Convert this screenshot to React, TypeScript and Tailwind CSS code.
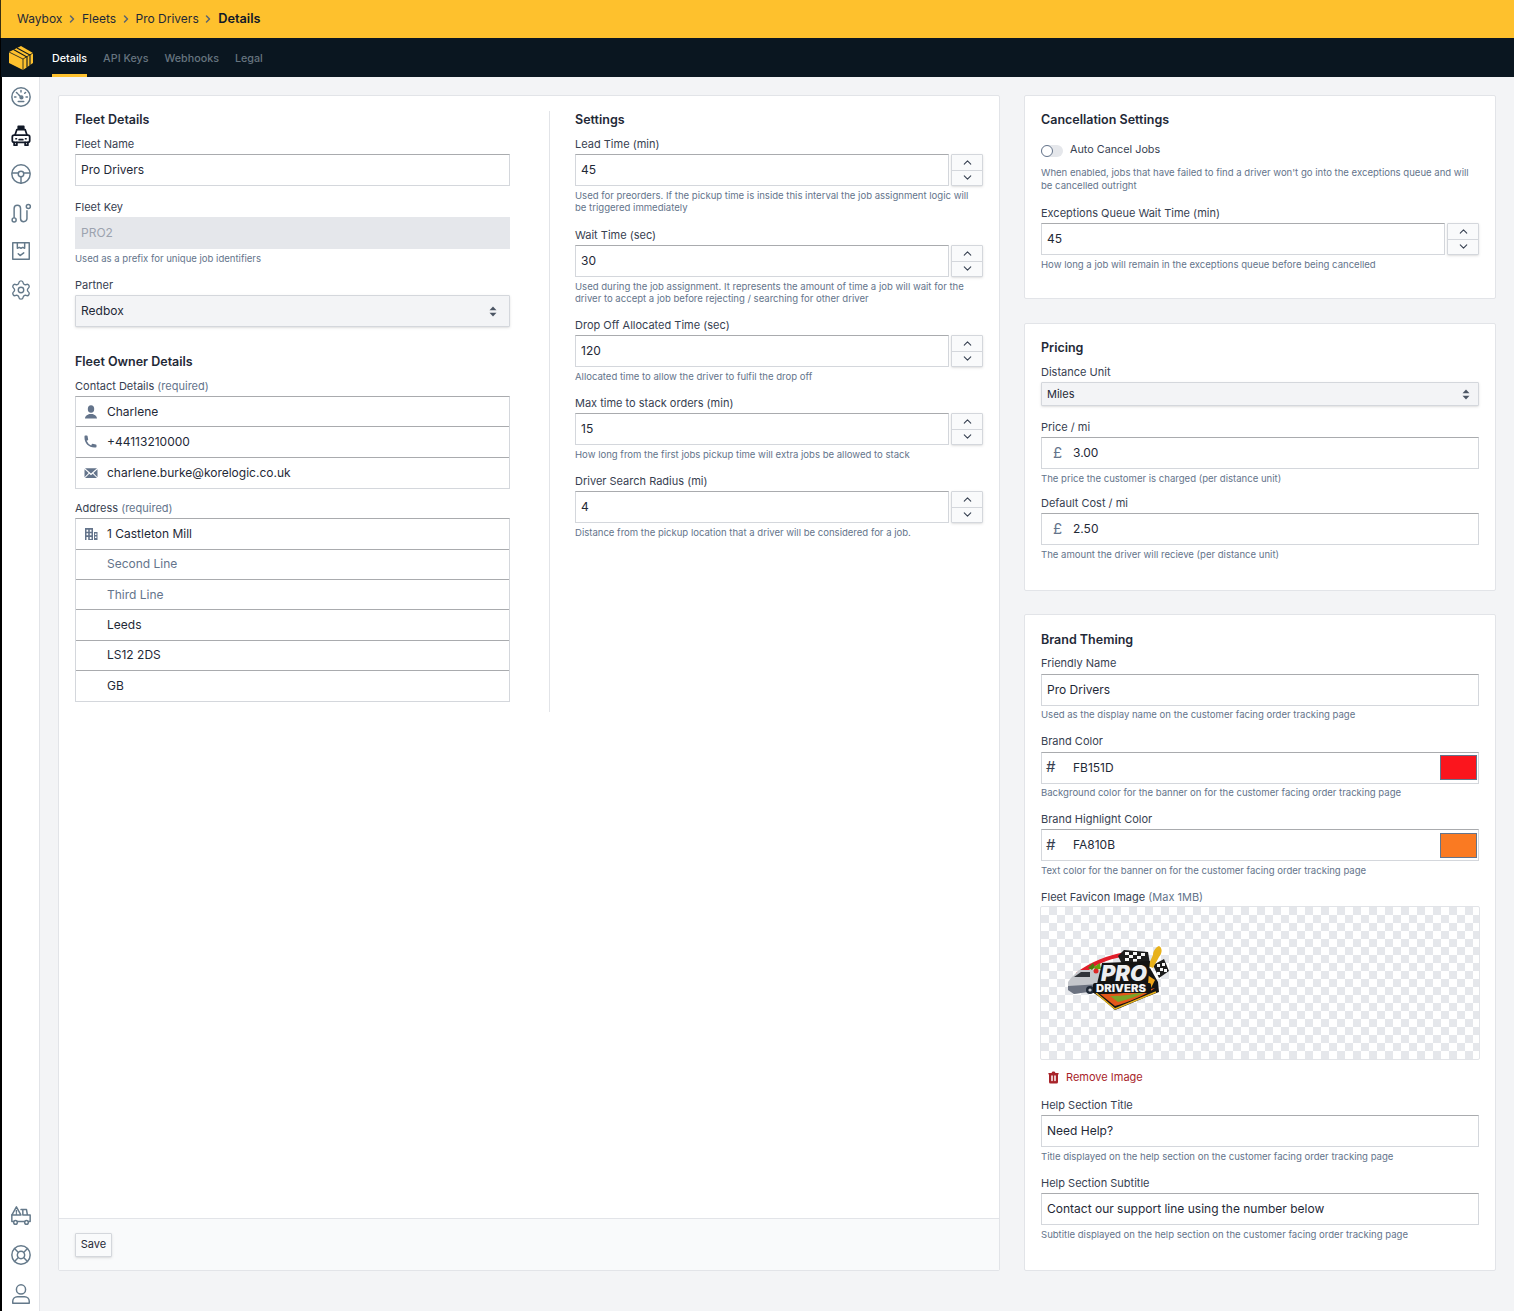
import * as React from 'react'
import { HiPhone, HiTrash } from 'react-icons/hi'
import { ChevronUp, ChevronDown, ChevronRight, Settings, LifeBuoy } from 'lucide-react'

const inputBorder = 'border border-[#d4d7dc] border-t-[#a9abae]'

function Label({ children, note }: { children: React.ReactNode; note?: string }) {
  return (
    <div className="h-[18.5px] text-[11px] leading-4 text-[#374151]">
      {children}
      {note && <span className="text-[#64748b]"> {note}</span>}
    </div>
  )
}

function Hint({ children }: { children: React.ReactNode }) {
  return <p className="-mb-[0.5px] mt-[3.5px] text-[9.55px] leading-3 text-[#64748b]">{children}</p>
}

function TextInput({ value }: { value: string }) {
  return (
    <div className={`flex h-8 flex-1 items-center bg-white px-[5px] text-[12px] text-[#1f2937] ${inputBorder}`}>
      {value}
    </div>
  )
}

function Field({ label, note, hint, className, children }: { label: string; note?: string; hint?: React.ReactNode; className?: string; children: React.ReactNode }) {
  return (
    <div className={`mb-[12.5px] ${className ?? ''}`}>
      <Label note={note}>{label}</Label>
      {children}
      {hint && <Hint>{hint}</Hint>}
    </div>
  )
}

function NumberInput({ value }: { value: string }) {
  return (
    <div className="flex gap-[2px]">
      <TextInput value={value} />
      <div className="flex h-8 w-8 flex-col rounded-[1px] border border-[#d4d7dc] bg-[#f9fafb] text-[#374151] shadow-sm">
        <div className="flex flex-1 items-center justify-center border-b border-[#d4d7dc]">
          <ChevronUp size={13} strokeWidth={2} />
        </div>
        <div className="flex flex-1 items-center justify-center">
          <ChevronDown size={13} strokeWidth={2} />
        </div>
      </div>
    </div>
  )
}

function UpDown() {
  return (
    <svg width="8" height="11" viewBox="0 0 8 11" className="fill-[#4b5563]">
      <path d="M4 0.5 7.5 4.2H0.5Z" />
      <path d="M4 10.5 7.5 6.8H0.5Z" />
    </svg>
  )
}

function Select({ value, small }: { value: string; small?: boolean }) {
  return (
    <div
      className={
        small
          ? 'flex h-6 items-center justify-between rounded-[1px] border border-[#d4d7dc] bg-[#f3f4f6] pl-[5px] pr-2 text-[11px] text-[#1f2937] shadow-sm'
          : 'flex h-8 items-center justify-between rounded-[1px] border border-[#d4d7dc] bg-[#f3f4f6] pl-[5px] pr-3 text-[12px] text-[#1f2937] shadow-sm'
      }
    >
      {value}
      <UpDown />
    </div>
  )
}

function UserSolid() {
  return (
    <svg width="14" height="14" viewBox="0 0 14 14" fill="currentColor">
      <ellipse cx="7" cy="4" rx="3.2" ry="3.8" />
      <path d="M1 13.5c0-2.8 2.6-3.8 4.4-4.6h3.2c1.8.8 4.4 1.8 4.4 4.6z" />
    </svg>
  )
}

function MailSolid() {
  return (
    <svg width="14" height="12" viewBox="0 0 14 12" fill="currentColor">
      <path d="M1 1.2h12L7 6.4zM.5 2.2 4.6 6 .5 10.2zM13.5 2.2 9.4 6l4.1 4.2zM1 11l4.3-4.3L7 8.2l1.7-1.5L13 11z" />
    </svg>
  )
}

function BuildingSolid() {
  return (
    <svg width="14" height="14" viewBox="0 0 14 14" fill="currentColor" fillRule="evenodd">
      <path d="M1 1h8v12H1zM2.5 2.7v2h1.7v-2zM5.8 2.7v2h1.7v-2zM2.5 6.3v2h1.7v-2zM5.8 6.3v2h1.7v-2zM2.5 10v3h1.7v-3zM5.8 10v2h1.7v-2z" />
      <path d="M10 5h3.5v8H10zM11 6.5v1.6h1.5V6.5zM11 9.5v1.6h1.5V9.5z" />
    </svg>
  )
}

function GroupRow({ icon, value, muted }: { icon?: React.ReactNode; value: string; muted?: boolean }) {
  return (
    <div className="flex h-[30.33px] items-center border-b border-[#a9abae] last:border-b-0">
      <div className="flex w-[31px] justify-center pr-[2px] text-[#64748b]">{icon}</div>
      <span className={muted ? 'text-[12px] text-[#64748b]' : 'text-[12px] text-[#1f2937]'}>{value}</span>
    </div>
  )
}

function Group({ children }: { children: React.ReactNode }) {
  return <div className={`bg-white ${inputBorder}`}>{children}</div>
}

function AddonInput({ addon, value }: { addon: string; value: string }) {
  return (
    <div className={`flex h-8 items-center bg-white text-[12px] text-[#1f2937] ${inputBorder}`}>
      <span className="w-[31px] text-center text-[15px] text-[#64748b]">{addon}</span>
      {value}
    </div>
  )
}

function ColorInput({ value, color }: { value: string; color: string }) {
  return (
    <div className={`flex h-8 items-center bg-white pr-[1px] text-[12px] text-[#1f2937] ${inputBorder}`}>
      <span className="w-[31px] pl-[4px] text-[15px] text-[#374151]">#</span>
      <span className="flex-1">{value}</span>
      <div className={`h-[25px] w-[37px] border border-[#64748b] ${color}`} />
    </div>
  )
}

function Card({ className, children }: { className?: string; children: React.ReactNode }) {
  return <section className={`rounded-[2px] border border-[#e2e4e8] bg-white ${className ?? ''}`}>{children}</section>
}

function Heading({ children }: { children: React.ReactNode }) {
  return <h2 className="mb-[7.5px] h-[17px] text-[12.5px] font-semibold leading-[18px] text-[#1f2937]">{children}</h2>
}

function Crumb({ children, last }: { children: React.ReactNode; last?: boolean }) {
  return (
    <>
      <span className={last ? 'text-[12.75px] font-semibold text-[#111827]' : 'text-[#1f2937]'}>{children}</span>
      {!last && <ChevronRight size={12} strokeWidth={3} className="mx-[3.75px] text-[#5b6470]" />}
    </>
  )
}

function Logo() {
  return (
    <svg width="24" height="24" viewBox="0 0 24 24">
      <path d="M0 6 12 0 24 7V17L14 24 0 17Z" fill="#fec12d" />
      <path d="M0 6 14 13 24 7M14 13V24" fill="none" stroke="#0a1620" strokeWidth="0.8" />
      <path d="M4.5 3.6 18 11V21.5M8 1.9 21 9V19.5" fill="none" stroke="#0a1620" strokeWidth="1.1" />
    </svg>
  )
}

const iconProps = {
  width: 22,
  height: 22,
  viewBox: '0 0 24 24',
  fill: 'none',
  stroke: 'currentColor',
  strokeWidth: 1.6,
  strokeLinecap: 'round' as const,
  strokeLinejoin: 'round' as const,
}

function SideIcons() {
  return (
    <div className="flex h-full flex-col items-center text-[#64798a]">
      <div className="mt-[9px] flex flex-col items-center gap-[16.5px]">
        <svg {...iconProps}>
          <circle cx="12" cy="12" r="10" />
          <path d="M12 5v1.5M7 7l1 1M17 7l-1 1M5 12h1.5M17.5 12H19M9 9l3.5 3.5" />
          <circle cx="12.5" cy="12.5" r="1.5" />
          <path d="M9 17h6" />
        </svg>
        <svg {...iconProps} strokeWidth={1.9} className="text-[#111827]">
          <path d="M9 1.5h6V4H9z" fill="currentColor" />
          <path d="M5.5 11 7.5 5h9l2 6" />
          <rect x="2.5" y="11" width="19" height="8" rx="2" />
          <path d="M6.5 15h.5M17 15h.5M10 16h4" />
          <path d="M4.5 19v3h3v-3M16.5 19v3h3v-3" />
        </svg>
        <svg {...iconProps}>
          <circle cx="12" cy="12" r="10" />
          <circle cx="12" cy="12" r="3" />
          <path d="M2.5 11H9M15 11h6.5M12 15v7" />
        </svg>
        <svg {...iconProps}>
          <circle cx="4.5" cy="19.5" r="2.2" />
          <circle cx="20" cy="5" r="2.2" />
          <path d="M4.5 17V7a3.5 3.5 0 0 1 7 0v11a3.5 3.5 0 0 0 7 0V9.5" />
        </svg>
        <svg {...iconProps}>
          <path d="M3 3h18v18H3z" />
          <path d="M8 3v6l2-1 2 1 2-1 2 1V3" />
          <path d="M9 15l2 2 4-3" />
        </svg>
        <Settings size={22} strokeWidth={1.5} />
      </div>
      <div className="mb-[6px] mt-auto flex flex-col items-center gap-[17px]">
        <svg {...iconProps}>
          <path d="M7 2 2 11h10zM7 6v2M7 9.5v.2" />
          <path d="M12 5h6l1 6h3v7h-2M2 11v7h2M8 18h8M14 5v6h5" />
          <circle cx="6" cy="19" r="2" />
          <circle cx="18" cy="19" r="2" />
        </svg>
        <LifeBuoy size={22} strokeWidth={1.6} />
        <svg {...iconProps}>
          <circle cx="12" cy="7" r="5" />
          <path d="M3 22v-2a5 5 0 0 1 5-5h8a5 5 0 0 1 5 5v2z" />
        </svg>
      </div>
    </div>
  )
}

function Favicon() {
  return (
    <svg width="102" height="68" viewBox="0 0 102 68">
      {/* swoosh and flags */}
      <path d="M8 27C22 16 40 9 58 6L54 11C40 13 26 19 16 28Z" fill="#e11d2a" />
      <path d="M50 10 56 4 80 6 82 18 54 18Z" fill="#1c1c1c" />
      <path d="M57 6h4v3h-4zM65 6h4v3h-4zM73 7h4v3h-4zM61 9h4v3h-4zM69 10h4v3h-4zM57 12h4v3h-4zM65 13h4v3h-4z" fill="#f5f5f5" />
      <path d="M85 19 96 13 101 25 91 32Z" fill="#1c1c1c" />
      <path d="M89 18h3v3h-3zM94 17h3v3h-3zM92 22h3v3h-3zM89 26h3v3h-3zM96 23h3v3h-3z" fill="#f5f5f5" />
      {/* fork */}
      <path d="M80 20 85 9C85 5 88 1 91 0 94 2 95 6 91 11L85 22Z" fill="#e8b21c" />
      {/* shield */}
      <path d="M26 44 82 22 90 36 91 46C80 50 62 58 47 64 40 58 34 52 24 46Z" fill="#141414" />
      <path d="M78 28 87 34 82 44 70 42Z" fill="#f2a516" />
      <path d="M32 48C50 48 72 46 87 42 76 50 60 56 47 60Z" fill="#e4571a" />
      <path d="M42 50C56 50 68 48 80 45 70 50 58 54 50 56Z" fill="#7ba428" />
      <path d="M28 47 47 63 88 46" fill="none" stroke="#e8b21c" strokeWidth="1.5" />
      {/* van */}
      <path d="M0 36 3 32 11 24H32L34 44 6 48 0 44Z" fill="#c4c7cc" />
      <path d="M0 40 33 38 34 44 6 48 0 44Z" fill="#6b7280" />
      <path d="M6 31 13 26H22V31Z" fill="#30343a" />
      <circle cx="22" cy="44" r="4" fill="#1f2937" />
      <circle cx="22" cy="44" r="1.6" fill="#c9ccd1" />
      {/* leaves */}
      <path d="M20 22 25 17 27 21 24 24Z" fill="#4d7c0f" />
      <path d="M26 21 32 17 33 23 27 24Z" fill="#65a30d" />
      <circle cx="28" cy="25" r="2.5" fill="#dc2626" />
      {/* lettering */}
      <path d="M34 17 82 15 80 38 29 38Z" fill="#141414" />
      <text x="56" y="35" textAnchor="middle" textLength="46" lengthAdjust="spacingAndGlyphs" fontFamily="Inter, sans-serif" fontWeight="900" fontStyle="italic" fontSize="22" fill="#eceef0">PRO</text>
      <rect x="25" y="37" width="58" height="10" rx="2" fill="#141414" />
      <text x="53" y="45.5" textAnchor="middle" textLength="50" lengthAdjust="spacingAndGlyphs" fontFamily="Inter, sans-serif" fontWeight="900" fontSize="10" fill="#f3f4f6">DRIVERS</text>
    </svg>
  )
}

export default function App() {
  return (
    <div className="flex h-[1311px] flex-col overflow-hidden bg-[#f3f4f6] [font-family:Inter,sans-serif]">
      <header className="flex h-[38px] items-center border-l border-[#3a3010] bg-[#fec12d] pl-4 text-[12px]">
        <Crumb>Waybox</Crumb>
        <Crumb>Fleets</Crumb>
        <Crumb>Pro Drivers</Crumb>
        <Crumb last>Details</Crumb>
      </header>
      <nav className="flex h-[39px] items-stretch border-l border-black bg-[#0a1620] text-[10.75px] font-medium text-[#66747f]">
        <div className="flex w-[39px] items-center justify-center">
          <Logo />
        </div>
        <div className="ml-3 flex gap-4">
          <a className="flex items-center border-b-[3px] border-[#fec12d] pt-[6px] text-white">Details</a>
          <a className="flex items-center border-b-[3px] border-transparent pt-[6px]">API Keys</a>
          <a className="flex items-center border-b-[3px] border-transparent pt-[6px]">Webhooks</a>
          <a className="flex items-center border-b-[3px] border-transparent pt-[6px]">Legal</a>
        </div>
      </nav>
      <div className="flex min-h-0 flex-1">
        <aside className="w-10 shrink-0 border-l-2 border-r border-l-black border-r-[#e2e4e8] bg-white">
          <SideIcons />
        </aside>
        <main className="flex flex-1 gap-6 pb-10 pl-[18px] pr-[18px] pt-[18px]">
          <Card className="flex w-[942px] flex-col">
            <div className="flex flex-1 items-start px-4 pt-[15px]">
              <div className="w-[435px]">
                <Heading>Fleet Details</Heading>
                <Field label="Fleet Name">
                  <TextInput value="Pro Drivers" />
                </Field>
                <Field label="Fleet Key" hint="Used as a prefix for unique job identifiers">
                  <div className="flex h-8 items-center bg-[#e5e7eb] px-[6px] text-[12px] text-[#9ca3af]">PRO2</div>
                </Field>
                <Field label="Partner">
                  <Select value="Redbox" />
                </Field>
                <div className="mt-[26px]">
                  <Heading>Fleet Owner Details</Heading>
                </div>
                <Label note="(required)">Contact Details</Label>
                <Group>
                  <GroupRow icon={<UserSolid />} value="Charlene" />
                  <GroupRow icon={<HiPhone size={15} />} value="+44113210000" />
                  <GroupRow icon={<MailSolid />} value="charlene.burke@korelogic.co.uk" />
                </Group>
                <div className="mt-[11px]">
                  <Label note="(required)">Address</Label>
                </div>
                <Group>
                  <GroupRow icon={<BuildingSolid />} value="1 Castleton Mill" />
                  <GroupRow value="Second Line" muted />
                  <GroupRow value="Third Line" muted />
                  <GroupRow value="Leeds" />
                  <GroupRow value="LS12 2DS" />
                  <GroupRow value="GB" />
                </Group>
              </div>
              <div className="ml-[38.5px] h-[601px] border-l border-[#e2e4e8]" />
              <div className="ml-[25.5px] flex-1">
                <Heading>Settings</Heading>
                <Field
                  label="Lead Time (min)"
                  hint={
                    <span className="block pr-[6px]">
                      Used for preorders. If the pickup time is inside this interval the job assignment logic will be triggered immediately
                    </span>
                  }
                >
                  <NumberInput value="45" />
                </Field>
                <Field
                  label="Wait Time (sec)"
                  className="pt-[1px]"
                  hint="Used during the job assignment. It represents the amount of time a job will wait for the driver to accept a job before rejecting / searching for other driver"
                >
                  <NumberInput value="30" />
                </Field>
                <Field label="Drop Off Allocated Time (sec)" hint="Allocated time to allow the driver to fulfil the drop off">
                  <NumberInput value="120" />
                </Field>
                <Field label="Max time to stack orders (min)" hint="How long from the first jobs pickup time will extra jobs be allowed to stack">
                  <NumberInput value="15" />
                </Field>
                <Field label="Driver Search Radius (mi)" hint="Distance from the pickup location that a driver will be considered for a job.">
                  <NumberInput value="4" />
                </Field>
              </div>
            </div>
            <div className="flex h-[52px] items-center border-t border-[#e2e4e8] bg-[#f9fafb] px-4">
              <button className="h-6 w-[37px] rounded-[1px] border border-[#d4d7dc] bg-[#f9fafb] text-[11px] text-[#1f2937] shadow-sm">
                Save
              </button>
            </div>
          </Card>

          <div className="flex w-[472px] flex-col">
            <Card className="h-[204px] px-4 pt-[15px]">
              <Heading>Cancellation Settings</Heading>
              <div className="mt-[14.5px] flex h-4 items-center gap-[7px] text-[10.8px] text-[#374151]">
                <div className="flex h-3 w-[22px] items-center rounded-full bg-[#e5e7eb]">
                  <div className="h-3 w-3 rounded-full border border-[#64748b] bg-white" />
                </div>
                Auto Cancel Jobs
              </div>
              <p className="mt-[7px] text-[9.55px] leading-[13px] text-[#64748b]">
                When enabled, jobs that have failed to find a driver won't go into the exceptions queue and will be cancelled outright
              </p>
              <div className="mt-[13px]">
                <Field label="Exceptions Queue Wait Time (min)" hint="How long a job will remain in the exceptions queue before being cancelled">
                  <NumberInput value="45" />
                </Field>
              </div>
            </Card>

            <Card className="mt-6 h-[268px] px-4 pt-[15px]">
              <Heading>Pricing</Heading>
              <Field label="Distance Unit">
                <Select value="Miles" small />
              </Field>
              <Field label="Price / mi" hint="The price the customer is charged (per distance unit)">
                <AddonInput addon="£" value="3.00" />
              </Field>
              <Field label="Default Cost / mi" hint="The amount the driver will recieve (per distance unit)" className="-mt-[2.5px]">
                <AddonInput addon="£" value="2.50" />
              </Field>
            </Card>

            <Card className="mt-[23px] h-[657px] px-4 pt-[15.5px]">
              <Heading>Brand Theming</Heading>
              <Field label="Friendly Name" hint="Used as the display name on the customer facing order tracking page">
                <TextInput value="Pro Drivers" />
              </Field>
              <Field label="Brand Color" hint="Background color for the banner on for the customer facing order tracking page">
                <ColorInput value="FB151D" color="bg-[#fb151d]" />
              </Field>
              <Field label="Brand Highlight Color" hint="Text color for the banner on for the customer facing order tracking page" className="-mt-[1px]">
                <ColorInput value="FA810B" color="bg-[#fa7a22]" />
              </Field>
              <Label note="(Max 1MB)">Fleet Favicon Image</Label>
              <div className="-mx-[1px] -mt-[1.5px] flex h-[154px] items-center rounded-[2px] border border-[#e2e4e8] bg-[repeating-conic-gradient(#e5e7eb_0_25%,#fff_0_50%)] bg-[length:16px_16px] pb-[6px] pl-[27px]">
                <Favicon />
              </div>
              <div className="mb-[11px] mt-[10px] flex h-4 items-center gap-[5px] pl-[5px] text-[11px] text-[#a8242a]">
                <HiTrash size={15} />
                Remove Image
              </div>
              <Field label="Help Section Title" hint="Title displayed on the help section on the customer facing order tracking page">
                <TextInput value="Need Help?" />
              </Field>
              <Field label="Help Section Subtitle" hint="Subtitle displayed on the help section on the customer facing order tracking page">
                <TextInput value="Contact our support line using the number below" />
              </Field>
            </Card>
          </div>
        </main>
      </div>
    </div>
  )
}
